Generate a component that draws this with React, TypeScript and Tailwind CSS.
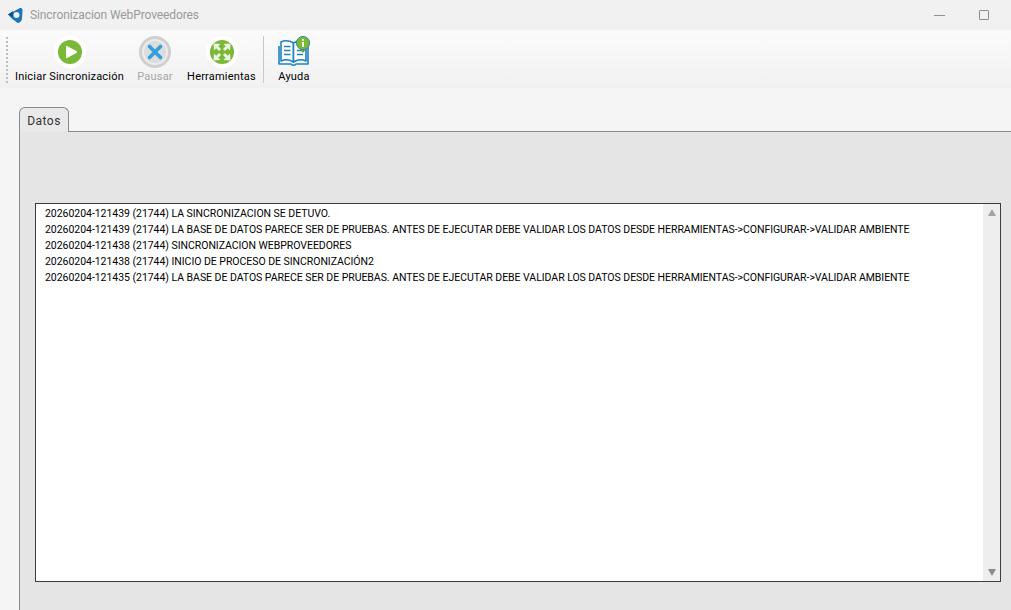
import React from "react";

const logLines = [
  "20260204-121439 (21744) LA SINCRONIZACION SE DETUVO.",
  "20260204-121439 (21744) LA BASE DE DATOS PARECE SER DE PRUEBAS. ANTES DE EJECUTAR DEBE VALIDAR LOS DATOS DESDE HERRAMIENTAS->CONFIGURAR->VALIDAR AMBIENTE",
  "20260204-121438 (21744) SINCRONIZACION WEBPROVEEDORES",
  "20260204-121438 (21744) INICIO DE PROCESO DE SINCRONIZACIÓN2",
  "20260204-121435 (21744) LA BASE DE DATOS PARECE SER DE PRUEBAS. ANTES DE EJECUTAR DEBE VALIDAR LOS DATOS DESDE HERRAMIENTAS->CONFIGURAR->VALIDAR AMBIENTE",
];

const AppLogo = () => (
  <svg width="17" height="17" viewBox="0 0 17 17">
    <path d="M1 7.5 L13 1 Q15.5 0.5 15.5 3 L15 12 Q14.5 14 12.5 15.5 Q11 16.5 9.5 15 Q5 12.5 1 7.5 Z" fill="#1a75b8" />
    <path d="M1 7.5 L6 4 L5.5 10 Z" fill="#0d4f86" />
    <circle cx="9.5" cy="8" r="3" fill="#f0f0f0" />
  </svg>
);

const PlayIcon = () => (
  <svg width="32" height="32" viewBox="0 0 32 32">
    <circle cx="16" cy="16" r="16" fill="#ffffff" />
    <circle cx="16" cy="16" r="12" fill="#7ab838" />
    <path d="M12 10.5 Q12 9.5 13 10 L22.5 15 Q23.5 16 22.5 17 L13 22 Q12 22.5 12 21.5 Z" fill="#ffffff" />
  </svg>
);

const PauseIcon = () => (
  <svg width="32" height="32" viewBox="0 0 32 32">
    <circle cx="16" cy="16" r="16" fill="#d0d0d0" />
    <circle cx="16" cy="16" r="13" fill="#ececec" />
    <circle cx="16" cy="16" r="11" fill="#dcdcdc" />
    <path d="M10.5 10.5 L21.5 21.5 M21.5 10.5 L10.5 21.5" stroke="#2f9fe0" strokeWidth="3.6" strokeLinecap="round" />
  </svg>
);

const ToolsIcon = () => (
  <svg width="32" height="32" viewBox="0 0 32 32">
    <circle cx="16" cy="16" r="16" fill="#ffffff" />
    <circle cx="16" cy="16" r="12" fill="#7ab838" />
    <g fill="#eef6e2">
      <path d="M7.5 7.5 L14.5 8 L12.3 10.2 L15 13 L13 15 L10.2 12.3 L8 14.5 Z" />
      <path d="M24.5 7.5 L17.5 8 L19.7 10.2 L17 13 L19 15 L21.8 12.3 L24 14.5 Z" />
      <path d="M7.5 24.5 L14.5 24 L12.3 21.8 L15 19 L13 17 L10.2 19.7 L8 17.5 Z" />
      <path d="M24.5 24.5 L17.5 24 L19.7 21.8 L17 19 L19 17 L21.8 19.7 L24 17.5 Z" />
    </g>
  </svg>
);

const HelpIcon = () => (
  <svg width="34" height="33" viewBox="0 0 34 33">
    <path d="M4 6 Q10 3 16.5 7 L16.5 26 Q10 22 4 25 Z" fill="#ffffff" stroke="#1c82c4" strokeWidth="1.6" strokeLinejoin="round" />
    <path d="M29 6 Q23 3 16.5 7 L16.5 26 Q23 22 29 25 Z" fill="#ffffff" stroke="#1c82c4" strokeWidth="1.6" strokeLinejoin="round" />
    <path d="M2 10 L2 28 L14 28 Q16.5 30.5 19 28 L31 28 L31 10" fill="none" stroke="#1c82c4" strokeWidth="1.6" strokeLinejoin="round" />
    <path d="M7 10.5 H13.5 M7 14.5 H13.5 M7 18.5 H13.5 M20 14.5 H26 M20 18.5 H26" stroke="#1c82c4" strokeWidth="1.5" />
    <path d="M22 12 L26 17 L30 12 Z" fill="#5da344" />
    <circle cx="26" cy="7" r="6.6" fill="#7ab838" stroke="#3d8a9a" strokeWidth="1" />
    <rect x="25.1" y="6" width="1.8" height="5" fill="#ffffff" />
    <rect x="25.1" y="3" width="1.8" height="1.8" fill="#ffffff" />
  </svg>
);

type ToolButtonProps = {
  label: string;
  icon: React.ReactNode;
  className: string;
  disabled?: boolean;
};
const ToolButton = (props: ToolButtonProps) => (
  <div className={`flex flex-col items-center shrink-0 ${props.className}`}>
    <div className="h-[34px] flex items-start justify-center">{props.icon}</div>
    <span
      className={`text-[11px] leading-[13px] whitespace-nowrap tracking-[0.2px] ${
        props.disabled ? "text-[#a6a6a6]" : "text-black"
      }`}
    >
      {props.label}
    </span>
  </div>
);

const App = () => {
  return (
    <div className="w-[1011px] h-[610px] overflow-hidden flex flex-col bg-[#f5f5f5] font-['Roboto','Liberation_Sans',sans-serif]">
      {/* Title bar */}
      <header className="h-[30px] shrink-0 bg-[#f1f1f1] flex items-center pl-[7px]">
        <AppLogo />
        <span className="ml-[6px] text-[12px] tracking-[-0.1px] text-[#9a9a9a]">
          Sincronizacion WebProveedores
        </span>
        <div className="ml-auto flex items-center pr-[22px]">
          <div className="w-[11px] h-px bg-[#8e8e8e] mr-[34px]" />
          <div className="w-[10px] h-[10px] border border-[#8e8e8e] rounded-[1px]" />
        </div>
      </header>

      {/* Toolbar */}
      <div className="h-[58px] shrink-0 bg-gradient-to-b from-[#fbfbfb] to-[#f1f1f1] flex items-start pl-[6px] pt-[6px]">
        <div className="w-[2px] h-[46px] mt-[1px] border-l-2 border-dotted border-[#bdbdbd]" />
        <ToolButton label="Iniciar Sincronización" icon={<PlayIcon />} className="ml-[7px] w-[109px]" />
        <ToolButton label="Pausar" icon={<PauseIcon />} disabled className="ml-[14px] w-[34px]" />
        <ToolButton label="Herramientas" icon={<ToolsIcon />} className="ml-[15px] w-[69px]" />
        <div className="w-px h-[47px] ml-[7px] bg-[#c8c8c8]" />
        <ToolButton label="Ayuda" icon={<HelpIcon />} className="ml-[15px] w-[30px]" />
      </div>

      {/* Tabs */}
      <main className="flex-1 min-h-0 flex flex-col pl-[19px] pt-[19px]">
        <div className="h-[25px] shrink-0 flex">
          <div className="w-[50px] h-[25px] pt-[2px] bg-[#e9e9e9] border border-b-0 border-[#7f8c93] rounded-t-[6px] flex items-center justify-center text-[12px] text-[#333] tracking-[0.5px] relative z-10">
            Datos
          </div>
        </div>
        <section className="flex-1 min-h-0 -mt-px bg-[#e5e5e5] border-t border-l border-[#7f8c93] pl-[15px] pr-[10px] pt-[71px]">
          <div className="h-[379px] border border-[#3c3c3c] bg-white flex">
            <div className="flex-1 min-w-0 pl-[9px] pt-[2px]">
              {logLines.map((line, i) => (
                <div key={i} className="h-[16px] leading-[16px] text-[10.5px] tracking-[-0.04px] text-black whitespace-nowrap">
                  {line}
                </div>
              ))}
            </div>
            <div className="w-[17px] shrink-0 bg-[#eeeeee] flex flex-col items-center justify-between py-[5px]">
              <div className="w-0 h-0 border-x-[4.5px] border-x-transparent border-b-[7px] border-b-[#a3a3a3]" />
              <div className="w-0 h-0 border-x-[4.5px] border-x-transparent border-t-[7px] border-t-[#8c8c8c]" />
            </div>
          </div>
        </section>
      </main>
    </div>
  );
};

export default App;
